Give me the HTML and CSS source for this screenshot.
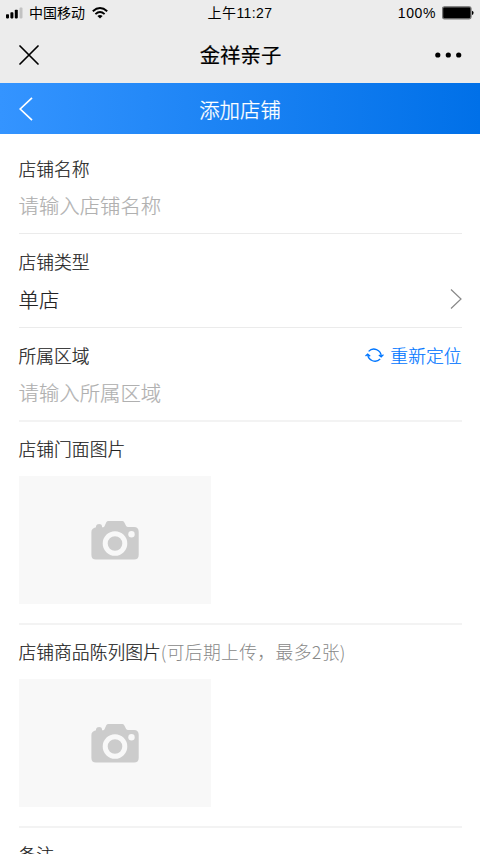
FILE: index.html
```html
<!DOCTYPE html>
<html lang="zh-CN">
<head>
<meta charset="utf-8">
<title>添加店铺</title>
<link rel="stylesheet" href="styles.css">
</head>
<body>
<svg class="defs" aria-hidden="true">
  <symbol id="camera" viewBox="0 0 48 40">
    <path fill="#ccc" d="M5 7.3V6Q5.5 4 8.2 4Q10.9 4 11 6V7.3H12.2Q13 7.3 13.5 6.3L15.3 2.3Q16 1.1 17.4 1.1H31.2Q32.6 1.1 33.2 2.3L35 5.8Q35.8 7.1 37 7.1H43Q47.7 7.1 47.7 11.8V35Q47.7 39.6 43 39.6H5Q.4 39.6 .4 35V12Q.4 8.5 5 7.3Z"/>
    <circle cx="24" cy="23.5" r="9.8" fill="none" stroke="#f8f8f8" stroke-width="5"/>
    <circle cx="40.5" cy="14.2" r="3.2" fill="#f8f8f8"/>
  </symbol>
</svg>
<div class="screen">
  <header class="status">
    <div class="carrier">
      <svg width="17" height="12" viewBox="0 0 17 12"><rect x="0" y="7.2" width="3" height="4.2" rx=".8"/><rect x="4.4" y="5.2" width="3" height="6.2" rx=".8"/><rect x="8.8" y="2.8" width="3" height="8.6" rx=".8"/><rect x="13.5" y=".6" width="3" height="10.8" rx=".8" fill="#c2c2c2"/></svg>
      <span class="carrier-name">中国移动</span>
      <svg width="16" height="12" viewBox="0 0 16 12"><path fill="none" stroke="#000" stroke-width="1.9" d="M.8 4.2Q8-2.2 15.2 4.2M3.4 7.1Q8 3 12.6 7.1"/><path d="M5.4 8.9Q8 6.9 10.6 8.9L8 11.6Z"/></svg>
    </div>
    <div class="time">上午11:27</div>
    <div class="battery">
      <span>100%</span>
      <svg width="32" height="14" viewBox="0 0 32 14"><rect x=".6" y=".8" width="28.4" height="12" rx="1.8" fill="#000" stroke="#777" stroke-width="1.3"/><path d="M30 4.7Q31.6 5 31.6 6.8Q31.6 8.6 30 8.9Z"/></svg>
    </div>
  </header>
  <div class="app-bar">
    <svg width="20" height="20" viewBox="0 0 20 20"><path fill="none" stroke="#000" stroke-width="1.7" stroke-linecap="round" d="M1 1L19 19M19 1L1 19"/></svg>
    <h1>金祥亲子</h1>
    <svg class="more" width="27" height="6" viewBox="0 0 27 6"><circle cx="2.8" cy="3" r="2.6"/><circle cx="13.3" cy="3" r="2.6"/><circle cx="23.7" cy="3" r="2.6"/></svg>
  </div>
  <nav class="page-bar">
    <svg width="14" height="24" viewBox="0 0 14 24"><path fill="none" stroke="#fff" stroke-width="1.7" d="M13 .8L1.2 12L13 23.2"/></svg>
    <h2>添加店铺</h2>
  </nav>
  <main class="form">
    <section class="field first">
      <div class="label">店铺名称</div>
      <div class="value placeholder">请输入店铺名称</div>
    </section>
    <section class="field">
      <div class="label">店铺类型</div>
      <div class="value select">单店<svg width="12" height="20" viewBox="0 0 12 20"><path fill="none" stroke="#888" stroke-width="1.2" d="M1 .5L11 10L1 19.5"/></svg></div>
    </section>
    <section class="field thick">
      <div class="label">所属区域
        <a class="relocate"><svg width="19" height="16" viewBox="0 0 19 16"><path fill="none" stroke="#0076ff" stroke-width="1.3" d="M3.6 4.4A7.3 7.3 0 0 1 16.2 9.2M15.2 12A7.3 7.3 0 0 1 2.7 7.4M.5 9L2.7 7L5.2 9.2M13.8 8L16.2 9.8L18.5 7.6"/></svg>重新定位</a>
      </div>
      <div class="value placeholder">请输入所属区域</div>
    </section>
    <section class="field thick photo">
      <div class="label">店铺门面图片</div>
      <div class="upload"><svg width="48" height="40"><use href="#camera"/></svg></div>
    </section>
    <section class="field thick photo">
      <div class="label">店铺商品陈列图片<span class="hint">(可后期上传，最多2张)</span></div>
      <div class="upload"><svg width="48" height="40"><use href="#camera"/></svg></div>
    </section>
    <section class="field photo">
      <div class="label">备注</div>
    </section>
  </main>
</div>
</body>
</html>
```
FILE: styles.css
```css
* { box-sizing: border-box; }
body { margin: 0; background: #fff; color: #222; font-family: "Noto Sans CJK SC", sans-serif; }
svg { display: block; flex: none; }
.defs { position: absolute; width: 0; height: 0; }
.screen { height: 854px; overflow: hidden; }
.status {
  display: grid; grid-template-columns: 1fr auto 1fr; align-items: center;
  height: 26px; padding: 0 6px; background: #ececec; color: #000;
  font-size: 14px; line-height: 20px;
}
.carrier, .battery { display: flex; align-items: center; }
.carrier-name { margin: -2px 7px 0 6px; }
.time, .battery { font-family: "Liberation Sans", "Noto Sans CJK SC", sans-serif; }
.time { letter-spacing: .4px; }
.battery { justify-content: flex-end; gap: 6px; letter-spacing: .6px; }
.app-bar {
  display: grid; grid-template-columns: 1fr auto 1fr; align-items: center;
  height: 57px; padding: 0 18px 0 19px; background: #ececec; color: #000;
}
h1, h2 { margin: 0; font-size: 20.4px; line-height: 28px; }
h1 { margin-top: -2px; font-weight: 400; -webkit-text-stroke: .2px; }
.more { justify-self: end; }
.page-bar {
  display: grid; grid-template-columns: 1fr auto 1fr; align-items: center;
  height: 51px; padding: 0 19px; color: #fff;
  background: linear-gradient(90deg, #3494ff, #0070e8);
}
h2 { font-weight: 300; -webkit-text-stroke: .3px; }
.form { padding: 5px 18.5px 0; }
.field { height: 94px; padding-top: 14px; border-bottom: 1px solid #ebebeb; }
.first { height: 95px; padding-top: 16px; }
.thick { border-bottom: 2px solid #f3f3f3; }
.label {
  display: flex; align-items: center; height: 25px;
  font-size: 17.8px; font-weight: 300; white-space: nowrap;
  -webkit-text-stroke: .2px;
}
.value {
  display: flex; align-items: center; justify-content: space-between;
  height: 37px; margin-top: 6px; font-size: 20.4px; font-weight: 300;
  -webkit-text-stroke: .2px;
}
.select { margin-top: 7px; }
.placeholder { color: #b0b0b0; }
.relocate { display: flex; align-items: center; gap: 6px; margin-left: auto; color: #0076ff; }
.photo { height: 203px; padding-top: 13px; }
.upload {
  display: flex; align-items: center; justify-content: center;
  width: 192px; height: 128px; margin-top: 16px; background: #f8f8f8;
}
.hint { color: #888; letter-spacing: .35px; -webkit-text-stroke: 0; }
```
